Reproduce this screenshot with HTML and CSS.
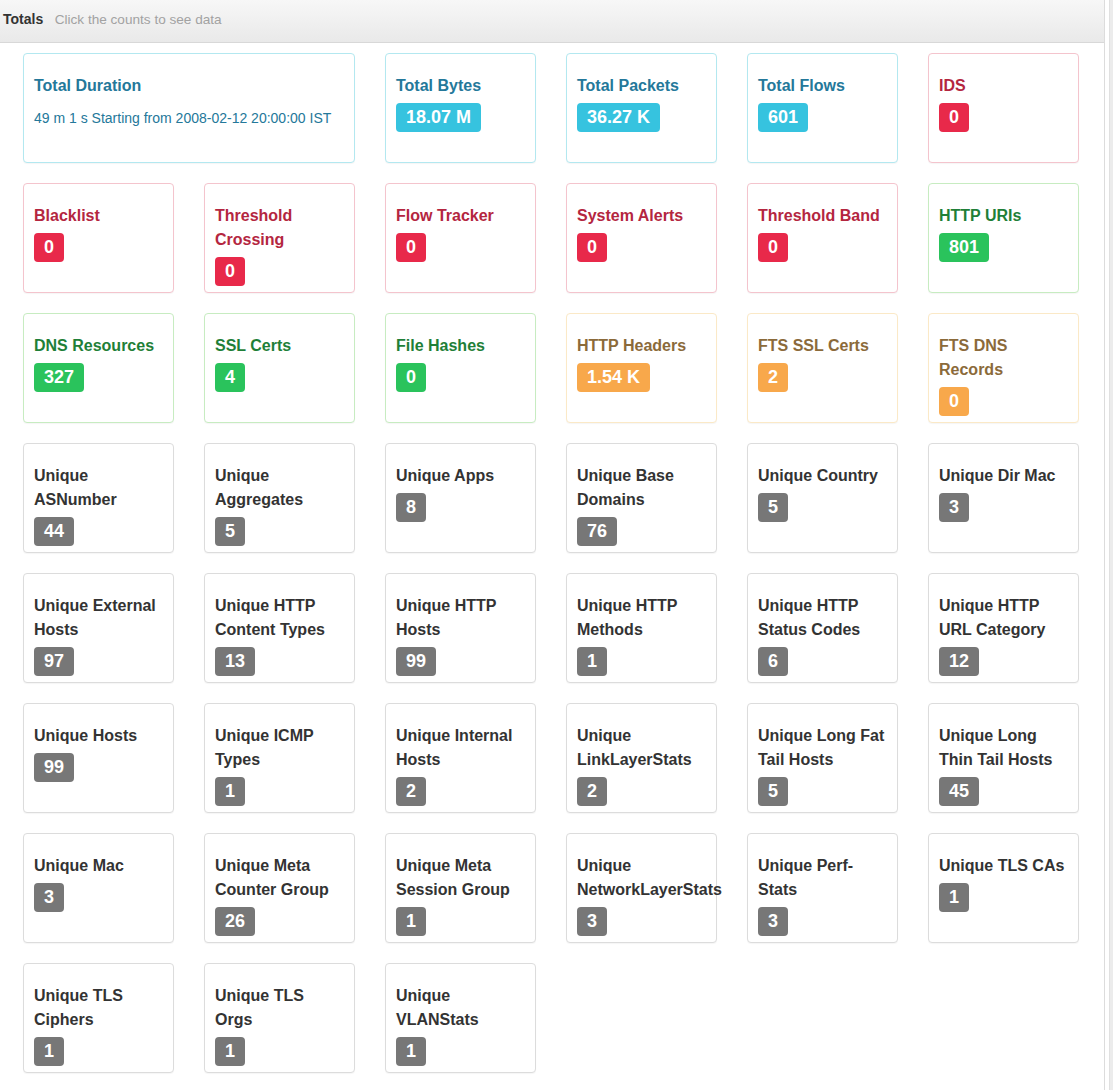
FILE: index.html
```html
<!DOCTYPE html>
<html lang="en">
<head>
<meta charset="utf-8">
<title>Totals</title>
<link rel="stylesheet" href="styles.css">
</head>
<body>
<div class="page">
  <section class="panel">
    <header class="panel-head">
      <span class="panel-title">Totals</span>
      <span class="panel-hint">Click the counts to see data</span>
    </header>
    <div class="grid">
      <div class="card info wide">
        <div class="card-title">Total Duration</div>
        <div class="card-desc">49 m 1 s Starting from 2008-02-12 20:00:00 IST</div>
      </div>
      <div class="card info"><div class="card-title">Total Bytes</div><span class="badge">18.07 M</span></div>
      <div class="card info"><div class="card-title">Total Packets</div><span class="badge">36.27 K</span></div>
      <div class="card info"><div class="card-title">Total Flows</div><span class="badge">601</span></div>
      <div class="card danger"><div class="card-title">IDS</div><span class="badge">0</span></div>

      <div class="card danger"><div class="card-title">Blacklist</div><span class="badge">0</span></div>
      <div class="card danger"><div class="card-title">Threshold Crossing</div><span class="badge">0</span></div>
      <div class="card danger"><div class="card-title">Flow Tracker</div><span class="badge">0</span></div>
      <div class="card danger"><div class="card-title">System Alerts</div><span class="badge">0</span></div>
      <div class="card danger"><div class="card-title">Threshold Band</div><span class="badge">0</span></div>
      <div class="card success"><div class="card-title">HTTP URIs</div><span class="badge">801</span></div>

      <div class="card success"><div class="card-title">DNS Resources</div><span class="badge">327</span></div>
      <div class="card success"><div class="card-title">SSL Certs</div><span class="badge">4</span></div>
      <div class="card success"><div class="card-title">File Hashes</div><span class="badge">0</span></div>
      <div class="card warning"><div class="card-title">HTTP Headers</div><span class="badge">1.54 K</span></div>
      <div class="card warning"><div class="card-title">FTS SSL Certs</div><span class="badge">2</span></div>
      <div class="card warning"><div class="card-title">FTS DNS Records</div><span class="badge">0</span></div>

      <div class="card plain"><div class="card-title">Unique ASNumber</div><span class="badge">44</span></div>
      <div class="card plain"><div class="card-title">Unique Aggregates</div><span class="badge">5</span></div>
      <div class="card plain"><div class="card-title">Unique Apps</div><span class="badge">8</span></div>
      <div class="card plain"><div class="card-title">Unique Base Domains</div><span class="badge">76</span></div>
      <div class="card plain"><div class="card-title">Unique Country</div><span class="badge">5</span></div>
      <div class="card plain"><div class="card-title">Unique Dir Mac</div><span class="badge">3</span></div>

      <div class="card plain"><div class="card-title">Unique External Hosts</div><span class="badge">97</span></div>
      <div class="card plain"><div class="card-title">Unique HTTP Content Types</div><span class="badge">13</span></div>
      <div class="card plain"><div class="card-title">Unique HTTP Hosts</div><span class="badge">99</span></div>
      <div class="card plain"><div class="card-title">Unique HTTP Methods</div><span class="badge">1</span></div>
      <div class="card plain"><div class="card-title">Unique HTTP Status Codes</div><span class="badge">6</span></div>
      <div class="card plain"><div class="card-title">Unique HTTP URL Category</div><span class="badge">12</span></div>

      <div class="card plain"><div class="card-title">Unique Hosts</div><span class="badge">99</span></div>
      <div class="card plain"><div class="card-title">Unique ICMP Types</div><span class="badge">1</span></div>
      <div class="card plain"><div class="card-title">Unique Internal Hosts</div><span class="badge">2</span></div>
      <div class="card plain"><div class="card-title">Unique LinkLayerStats</div><span class="badge">2</span></div>
      <div class="card plain"><div class="card-title">Unique Long Fat Tail Hosts</div><span class="badge">5</span></div>
      <div class="card plain"><div class="card-title">Unique Long Thin Tail Hosts</div><span class="badge">45</span></div>

      <div class="card plain"><div class="card-title">Unique Mac</div><span class="badge">3</span></div>
      <div class="card plain"><div class="card-title">Unique Meta Counter Group</div><span class="badge">26</span></div>
      <div class="card plain"><div class="card-title">Unique Meta Session Group</div><span class="badge">1</span></div>
      <div class="card plain"><div class="card-title">Unique NetworkLayerStats</div><span class="badge">3</span></div>
      <div class="card plain"><div class="card-title">Unique Perf-Stats</div><span class="badge">3</span></div>
      <div class="card plain"><div class="card-title">Unique TLS CAs</div><span class="badge">1</span></div>

      <div class="card plain"><div class="card-title">Unique TLS Ciphers</div><span class="badge">1</span></div>
      <div class="card plain"><div class="card-title">Unique TLS Orgs</div><span class="badge">1</span></div>
      <div class="card plain"><div class="card-title">Unique VLANStats</div><span class="badge">1</span></div>
    </div>
  </section>
  <div class="scroll-edge"></div>
</div>
</body>
</html>
```

FILE: styles.css
```css
* { box-sizing: border-box; }

html, body {
  margin: 0;
  padding: 0;
  background: #fff;
  font-family: "Liberation Sans", Arial, sans-serif;
  color: #333;
}

.page {
  display: flex;
  align-items: stretch;
  min-height: 1090px;
}

.panel {
  flex: 0 0 1105px;
  border-right: 1px solid #dcdcdc;
  padding-bottom: 20px;
}

.scroll-edge {
  flex: 0 0 4px;
  margin-left: 4px;
  background: #ececec;
  border-left: 1px solid #e0e0e0;
}

.panel-head {
  height: 43px;
  padding: 9px 3px 0;
  line-height: 20px;
  background: linear-gradient(to bottom, #f7f7f7 0%, #e9e9e9 100%);
  border-bottom: 1px solid #d8d8d8;
  white-space: nowrap;
}

.panel-title {
  font-size: 14px;
  font-weight: 700;
  color: #333;
}

.panel-hint {
  margin-left: 7px;
  font-size: 13.6px;
  color: #a2a2a2;
}

.grid {
  display: grid;
  grid-template-columns: repeat(6, 151px);
  column-gap: 30px;
  row-gap: 20px;
  padding: 10px 0 0 23px;
}

.card {
  height: 110px;
  padding: 20px 10px 0;
  border: 1px solid #ddd;
  border-radius: 4px;
  background: #fff;
  box-shadow: 0 1px 1px rgba(0, 0, 0, 0.04);
}

.card.wide { grid-column: span 2; }

.card-title {
  font-size: 16px;
  font-weight: 700;
  line-height: 24px;
}

.card-desc {
  margin-top: 10px;
  font-size: 14px;
  line-height: 20px;
}

.badge {
  display: inline-block;
  margin-top: 5px;
  padding: 4px 10px 4px;
  font-size: 18px;
  font-weight: 700;
  line-height: 21px;
  color: #fff;
  border-radius: 4px;
  white-space: nowrap;
}

.card.info { border-color: #b3e8f0; }
.card.info .card-title,
.card.info .card-desc { color: #24789a; }
.card.info .badge { background: #36c3df; }

.card.danger { border-color: #f4c4cd; }
.card.danger .card-title { color: #b4263f; }
.card.danger .badge { background: #e8294a; }

.card.success { border-color: #c7ecc1; }
.card.success .card-title { color: #1f7f38; }
.card.success .badge { background: #2ac35c; }

.card.warning { border-color: #fbe9c7; }
.card.warning .card-title { color: #8b6a3a; }
.card.warning .badge { background: #f8a84b; }

.card.plain { border-color: #dcdcdc; }
.card.plain .card-title { color: #333; }
.card.plain .badge { background: #777; }
```
